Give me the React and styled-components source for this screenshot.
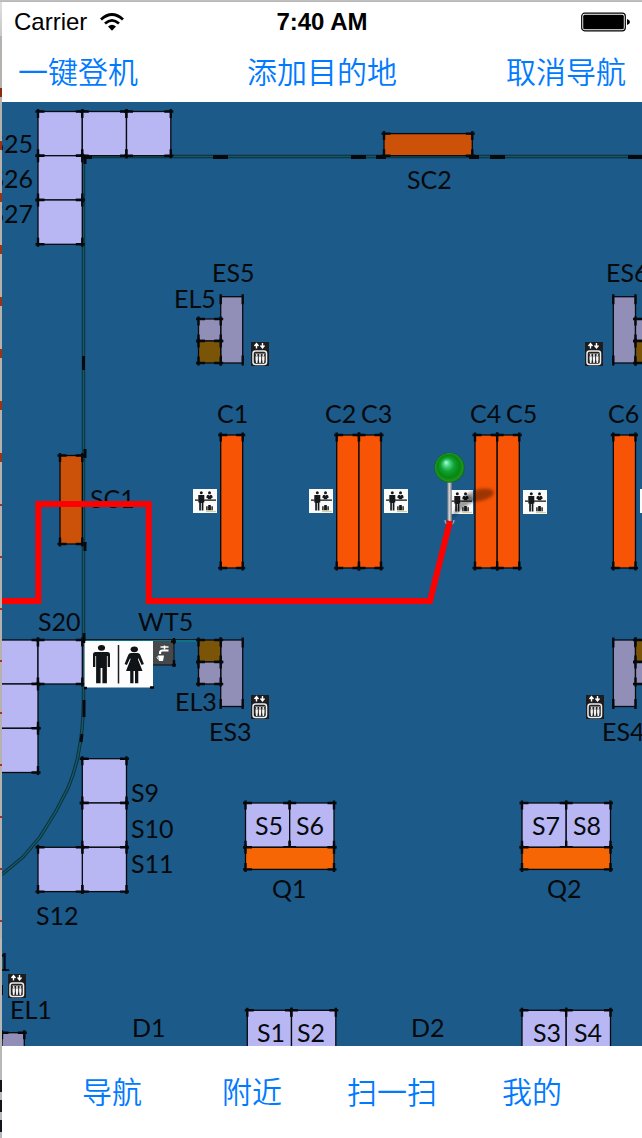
import React from "react";
import styled, { createGlobalStyle } from "styled-components";

const GlobalStyle = createGlobalStyle`
  * { box-sizing: border-box; }
  body { margin: 0; background: #fff; }
`;

const Screen = styled.div`
  min-height: 100vh;
  display: grid;
  grid-template-rows: auto 1fr auto;
  padding: 2px 0 0 2px;
  background:
    linear-gradient(#c4c4c4, #b4b4b4) 0 0 / 100% 2px no-repeat,
    linear-gradient(#e0e0e0, #c8c8c8) 0 0 / 2px 36px no-repeat,
    repeating-linear-gradient(#b4b1ae 0 88px, #8a2d0c 88px 97px, #b4b1ae 97px 140px) 0 0 / 2px 140px no-repeat,
    repeating-linear-gradient(#9c3510 0 9px, #b4b1ae 9px 52px) 0 141px / 2px 330px no-repeat,
    repeating-linear-gradient(#b4b1ae 0 33px, #b03028 33px 35px, #b4b1ae 35px 52px) 0 471px / 2px 468px no-repeat,
    repeating-linear-gradient(#10161c 0 12px, #b8b8b8 12px 20px) 0 1080px / 2px 100% no-repeat,
    #b8b8b8;
`;

const Header = styled.header`
  height: 100px;
  background: #fff;
`;

const StatusBar = styled.div`
  display: grid;
  grid-template-columns: 1fr auto 1fr;
  align-items: center;
  height: 40px;
  padding: 0 12px;
  color: #000;
  font: 24px/40px "Liberation Sans", Arial, sans-serif;
`;

const Carrier = styled.div`
  display: flex;
  align-items: center;
  gap: 12px;
`;

const Clock = styled.time`
  font-weight: 700;
`;

const Battery = styled.svg`
  justify-self: end;
`;

const NavBar = styled.nav`
  display: flex;
  justify-content: space-between;
  align-items: center;
  height: 56px;
  padding: 0 16px;
`;

const TabBar = styled.nav`
  display: grid;
  grid-template-columns: repeat(4, 1fr);
  justify-items: center;
  align-items: center;
  height: 92px;
  padding: 0 40px 4px;
  background: #fff;
`;

const TextButton = styled.button`
  padding: 0;
  border: 0;
  background: none;
  color: #007aff;
  font: 350 30px/44px "Noto Sans CJK SC", sans-serif;
  white-space: nowrap;
  cursor: pointer;
`;

const MapView = styled.main`
  display: flex;
  overflow: hidden;
  background: #1c5a8a;
`;

const MapSvg = styled.svg`
  display: block;
  width: 100%;
  height: auto;
`;

const Label = styled.text`
  fill: #060a0d;
  font: 25px "Lato", "Noto Sans", sans-serif;
`;

const fills = {
  shop: "#b8b7f4",
  desk: "#f85406",
  security: "#cb5208",
  queue: "#f76605",
  stairs: "#918fb8",
  lift: "#7a5407",
};

const CellRect = styled.rect`
  fill: ${(p) => fills[p.$kind]};
  stroke: #080a10;
  stroke-width: 1.3;
`;

const Ticks = styled.path`
  fill: none;
  stroke: #06090c;
  stroke-width: 2.4;
`;

const Wall = styled.path`
  fill: none;
  stroke: ${(p) => p.$color};
  stroke-width: ${(p) => p.$width};
`;

const Route = styled.path`
  fill: none;
  stroke: #f00;
  stroke-width: 6;
  stroke-linejoin: miter;
`;

/* kind, x1, y1, x2, y2 */
const cells = [
  ["shop", 38, 111.5, 82.3, 155.7],
  ["shop", 82.3, 111.5, 126.5, 155.7],
  ["shop", 126.5, 111.5, 170.8, 155.7],
  ["shop", 38, 155.7, 82.3, 200],
  ["shop", 38, 200, 82.3, 244.3],
  ["security", 384, 133.6, 472.3, 155.7],
  ["security", 60, 455.5, 82.3, 544],
  ["stairs", 220.7, 296.7, 242.7, 363],
  ["stairs", 198.5, 319, 220.7, 341],
  ["lift", 198.5, 341, 220.7, 363],
  ["stairs", 613.3, 296.7, 635.5, 363],
  ["stairs", 635.5, 319, 658, 341],
  ["lift", 635.5, 341, 658, 363],
  ["desk", 220.7, 435, 242.7, 568],
  ["desk", 336.7, 435, 359, 568],
  ["desk", 359, 435, 381, 568],
  ["desk", 475, 435, 497.2, 568],
  ["desk", 497.2, 435, 519.3, 568],
  ["desk", 613.3, 435, 635.5, 568],
  ["shop", -6, 640, 38, 684],
  ["shop", 38, 640, 82.3, 684],
  ["shop", -6, 684, 38, 728.3],
  ["shop", -6, 728.3, 38, 772.5],
  ["stairs", 220.7, 640, 242.7, 706.5],
  ["lift", 198.5, 640, 220.7, 662],
  ["stairs", 198.5, 662, 220.7, 684],
  ["stairs", 613.3, 640, 635.5, 706.5],
  ["lift", 635.5, 640, 658, 662],
  ["stairs", 635.5, 662, 658, 684],
  ["shop", 82.3, 758.7, 126.5, 803],
  ["shop", 82.3, 803, 126.5, 847.3],
  ["shop", 82.3, 847.3, 126.5, 891.6],
  ["shop", 38, 847.3, 82.3, 891.6],
  ["shop", 245.5, 803, 289.7, 847.3],
  ["shop", 289.7, 803, 334, 847.3],
  ["queue", 245.5, 847.3, 334, 869.4],
  ["shop", 522, 803, 566.2, 847.3],
  ["shop", 566.2, 803, 610.5, 847.3],
  ["queue", 522, 847.3, 610.5, 869.4],
  ["shop", 247.3, 1010.3, 291.5, 1056],
  ["shop", 291.5, 1010.3, 335.8, 1056],
  ["shop", 522, 1010.3, 566.2, 1056],
  ["shop", 566.2, 1010.3, 610.5, 1056],
  ["stairs", 2, 1032.7, 24.3, 1056],
];

const labels = [
  ["SC2", 407, 189], ["ES5", 212, 282], ["EL5", 174, 308],
  ["ES6", 606, 282], ["C1", 217, 423], ["C2", 325, 423],
  ["C3", 361, 423], ["C4", 470, 423], ["C5", 506, 423],
  ["C6", 608, 423], ["SC1", 90, 508], ["S20", 38, 631],
  ["WT5", 138, 631], ["EL3", 175, 711], ["ES3", 209, 741],
  ["ES4", 602, 741], ["S9", 131, 802], ["S10", 131, 838],
  ["S11", 131, 873], ["S12", 36, 925], ["S5", 255, 835],
  ["S6", 296, 835], ["S7", 532, 835], ["S8", 573, 835],
  ["Q1", 272, 898], ["Q2", 547, 898], ["S1", 257, 1042],
  ["S2", 297, 1042], ["S3", 533, 1042], ["S4", 574, 1042],
  ["D1", 132, 1037], ["D2", 411, 1037], ["EL1", 10, 1019],
];

const edgeLabels = [
  ["S25", 33, 153], ["S26", 33, 188], ["S27", 33, 223], ["ES1", 11, 971],
];

function Cell({ kind, x1, y1, x2, y2 }) {
  const corners = [
    [x1, y1, 1, 1], [x2, y1, -1, 1], [x1, y2, 1, -1], [x2, y2, -1, -1],
  ];
  const tall = kind === "stairs" && y2 - y1 > 50;
  const d = corners
    .map(([x, y, h, v]) =>
      (tall ? "" : `M${x - 2.5 * h} ${y}h${9 * h}`) + `M${x} ${y - 2.5 * v}v${(tall ? 10 : 9) * v}`)
    .join("");
  return (
    <g>
      <CellRect $kind={kind} x={x1} y={y1} width={x2 - x1} height={y2 - y1} />
      <Ticks d={d} />
    </g>
  );
}

function LiftIcon({ x, y }) {
  return (
    <g transform={`translate(${x} ${y})`}>
      <rect width="18" height="24" fill="#1d1c1f" />
      <path d="M5.5 6.500V2M3.500 4 5.500 1.500l2 2.500M11.500 1v4.500M9.500 3.500l2 2.500 2-2.500" fill="none" stroke="#fff" strokeWidth="1.400" />
      <rect x="2" y="9" width="13.500" height="13.500" rx="2.500" fill="#222" stroke="#eee" strokeWidth="1.500" />
      <path d="M4 11.500h10" stroke="#999" strokeWidth=".7" />
      <g fill="#f4f4f4">
        <circle cx="5.700" cy="13" r="1" /><circle cx="9" cy="13" r="1" /><circle cx="12.300" cy="13" r="1" />
        <path d="M4.500 14.300h2.400v3.200l-.5 3.500H5l-.5-3.500zM7.800 14.300h2.400v3.200l-.5 3.500H8.300l-.5-3.500zM11.100 14.300h2.400v3.200l-.5 3.500h-1.400l-.5-3.500z" />
      </g>
    </g>
  );
}

function CheckInIcon({ x, y }) {
  return (
    <g transform={`translate(${x} ${y})`}>
      <rect width="24" height="24" fill="#fbfbfb" />
      <path d="M13 22.500h10" stroke="#d8cf9b" strokeWidth="1.200" />
      <path d="M2 11.200h3.500M11 11.200h12" stroke="#111" strokeWidth="1.200" />
      <g fill="#15181b">
        <circle cx="8.300" cy="3.800" r="1.500" />
        <path d="M5.300 6h6v7.500h-.9V21.500H8.700V14h-.8v7.500H6.200v-8h-.9z" />
        <circle cx="16.500" cy="3.800" r="1.500" />
        <path d="M14 6.300l1.500-.5 1 1 1-1 1.500.5.800 2.200-1.600.700v1h-3.400v-1l-1.600-.700z" />
        <path d="M15.200 17.300v-1.300h2.600v1.300h2v4h-6.600v-4z" />
      </g>
      <path d="M14.700 17v4.500M18.400 17v4.500" stroke="#eee" strokeWidth=".5" />
    </g>
  );
}

function Restroom() {
  return (
    <g>
      <rect x="84.500" y="641" width="68.500" height="46.500" fill="#fdfdfd" />
      <path d="M118.500 645v38.500" stroke="#1b1f22" strokeWidth="1.500" />
      <g fill="#111417">
        <ellipse cx="101.500" cy="647.800" rx="3.600" ry="2.900" />
        <path d="M95.500 652h12q2.500 0 2.500 2.500V667h-2.300v-11h-.8v27.300h-4.500V668h-1.800v15.300h-4.500V656h-.8v11H93v-12.500q0-2.500 2.500-2.500z" />
        <ellipse cx="134.300" cy="649.300" rx="3.700" ry="2.900" />
        <path d="M131 653h6.600q2 0 2.700 2l3.600 9-2.300 1-3.300-7-.3 1.500 4.500 11.500h-4.200v12.300H135V671h-1.500v12.300h-3.300V671H126l4.500-11.500-.3-1.500-3.300 7-2.300-1 3.600-9q.8-2 2.800-2z" />
      </g>
      <path d="M84 688h3M150 687.500h4M84 640v3" stroke="#000" strokeWidth="2.500" />
    </g>
  );
}

function WaterTap() {
  return (
    <g>
      <rect x="153" y="641" width="21" height="24" fill="#46494b" />
      <path d="M153 665h21V641" fill="none" stroke="#0b0e10" />
      <path d="M160.500 647h8M164.500 645.500v4" fill="none" stroke="#fff" strokeWidth="1.500" />
      <path d="M160 654v-1q0-2.500 2.500-2.500h6" fill="none" stroke="#fff" strokeWidth="2.200" />
      <path d="M158 655.500h6l-1 5.500h-4z" fill="#fff" />
      <path d="M158.500 656q-3 1.500 0 3.500" fill="none" stroke="#fff" />
      <Ticks d="M174 638v6M171 641.500h5M174 660v7M172 665h4" />
    </g>
  );
}

function Pin() {
  return (
    <g>
      <path d="M451 520Q457 503 467 494L476 500Q461 508 451 520z" fill="#000" opacity=".38" filter="url(#soft)" />
      <ellipse cx="480" cy="495" rx="14" ry="6" transform="rotate(-12 480 495)" fill="#000" opacity=".36" filter="url(#soft)" />
      <path d="M445 520q0 4 4.500 5 4.500-1 4.500-5" fill="none" stroke="#9aaebb" strokeWidth="1.300" />
      <rect x="447.300" y="481" width="4.500" height="40" fill="url(#stem)" />
      <circle cx="449.500" cy="467.700" r="15" fill="url(#ball)" />
    </g>
  );
}

const wallPath = "M642 156.500H83.500V700Q83 731 79 750 76 769 68 788L55 813 40 837 23 857 2 874.500";

function TerminalMap() {
  return (
    <MapSvg viewBox="2 102 640 944" role="img" aria-label="航站楼地图">
      <defs>
        <filter id="soft" x="-30%" y="-30%" width="160%" height="160%">
          <feGaussianBlur stdDeviation="1.500" />
        </filter>
        <radialGradient id="ball" cx=".5" cy=".5" r=".5" fx=".38" fy=".32">
          <stop offset="0" stopColor="#b4ffd8" />
          <stop offset=".2" stopColor="#4ad684" />
          <stop offset=".45" stopColor="#12a034" />
          <stop offset=".75" stopColor="#07870f" />
          <stop offset=".92" stopColor="#1c9422" />
          <stop offset="1" stopColor="#0b6412" />
        </radialGradient>
        <linearGradient id="stem">
          <stop offset="0" stopColor="#73797d" />
          <stop offset=".45" stopColor="#d5d6d8" />
          <stop offset="1" stopColor="#777b80" />
        </linearGradient>
      </defs>
      <rect x="2" y="102" width="640" height="944" fill="#1c5a8a" />
      <Wall d={wallPath} $color="#0c2f38" $width={3.4} />
      <Wall d={wallPath} $color="#155866" $width={1.6} />
      <Wall d="M84 640.500H199" $color="#0b1b22" $width={3} />
      <Wall d="M84 641H199" $color="#0e7284" $width={1.8} />
      <Wall d="M213 157h15M351 157h15M490 157h15M628 157h14M376 157h10M469 157h10M83 157h9" $color="#06090c" $width={4} />
      <Wall d="M83.500 356v14M85 449v9M85 542v9M84 633v10M84 700v17M82 734l-1 8M85 157v7" $color="#06090c" $width={3} />
      {cells.map(([kind, x1, y1, x2, y2]) => (
        <Cell key={`${x1}-${y1}`} kind={kind} x1={x1} y1={y1} x2={x2} y2={y2} />
      ))}
      <Restroom />
      <WaterTap />
      <path d="M2.500 985v10" stroke="#05080b" />
      {[[251, 342], [585, 342], [251, 695], [586, 695], [8, 974]].map(([x, y]) => (
        <LiftIcon key={`${x}-${y}`} x={x} y={y} />
      ))}
      {[[193, 489], [309, 489], [384, 489], [449, 490], [523, 490], [640, 489]].map(([x, y]) => (
        <CheckInIcon key={x} x={x} y={y} />
      ))}
      {labels.map(([text, x, y]) => (
        <Label key={text} x={x} y={y}>{text}</Label>
      ))}
      {edgeLabels.map(([text, x, y]) => (
        <Label key={text} x={x} y={y} textAnchor="end">{text}</Label>
      ))}
      <Pin />
      <Route d="M2 601H38.300V504H148.700V601H430L450 521" />
    </MapSvg>
  );
}

export default function App() {
  return (
    <>
      <GlobalStyle />
      <Screen>
        <Header>
          <StatusBar>
            <Carrier>
              Carrier
              <svg width="26" height="20" viewBox="0 0 26 20" aria-hidden="true">
                <path d="M2 7.500Q13-2.500 24 7.500M6 11.500Q13 5.300 20 11.500" fill="none" stroke="#000" strokeWidth="2.800" />
                <path d="M9 14.500Q13 11 17 14.500L13 18.800z" />
              </svg>
            </Carrier>
            <Clock>7:40 AM</Clock>
            <Battery width="49" height="20" viewBox="0 0 49 20" aria-hidden="true">
              <rect x=".7" y="1.200" width="43.600" height="17.600" rx="3" fill="none" stroke="#000" strokeWidth="1.200" />
              <rect x="2.200" y="2.700" width="40.600" height="14.600" rx="1.500" />
              <path d="M46 7q3 .8 3 3t-3 3z" />
            </Battery>
          </StatusBar>
          <NavBar>
            <TextButton type="button">一键登机</TextButton>
            <TextButton type="button">添加目的地</TextButton>
            <TextButton type="button">取消导航</TextButton>
          </NavBar>
        </Header>
        <MapView>
          <TerminalMap />
        </MapView>
        <TabBar>
          <TextButton type="button">导航</TextButton>
          <TextButton type="button">附近</TextButton>
          <TextButton type="button">扫一扫</TextButton>
          <TextButton type="button">我的</TextButton>
        </TabBar>
      </Screen>
    </>
  );
}
